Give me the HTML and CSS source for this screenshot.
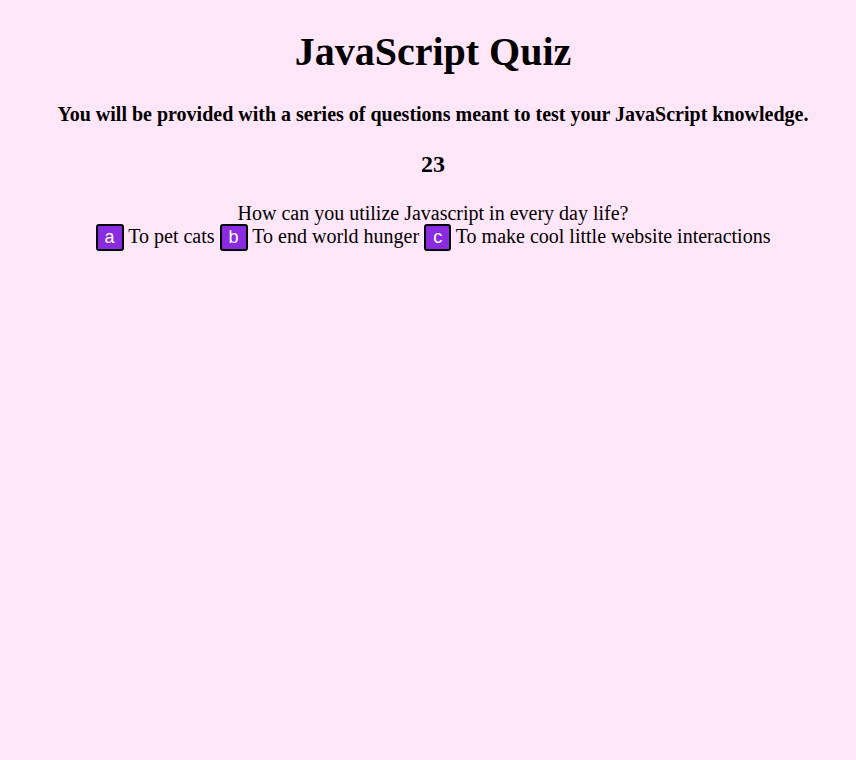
FILE: index.html
```html
<!DOCTYPE html>
<html>
<head>
<meta charset="utf-8">
<link rel="stylesheet" href="styles.css">
</head>
<body>
<header class="header">
  <h1 class="title">JavaScript Quiz</h1>
  <h3 class="intro">You will be provided with a series of questions meant to test your JavaScript knowledge.</h3>
</header>
<h2 class="timer">23</h2>
<div class="quiz">
  <div class="question">How can you utilize Javascript in every day life?</div>
  <div class="answers">
    <button class="choice">a</button> To pet cats <button class="choice">b</button> To end world hunger <button class="choice">c</button> To make cool little website interactions
  </div>
</div>
</body>
</html>
```
FILE: styles.css
```css
body {
  margin: 8px;
  padding-left: 10px;
  background: #ffe6f8;
  font-family: "Liberation Serif", "Times New Roman", serif;
  color: #000;
  text-align: center;
}
.title {
  font-size: 40px;
  margin: 20px 0 28px;
}
.intro {
  font-size: 20px;
  margin: 0;
}
.timer {
  font-size: 24px;
  margin: 25px 0 24px;
}
.quiz {
  font-size: 20px;
}
.answers {
  margin-top: -1px;
}
.choice {
  font-family: "Liberation Sans", Arial, sans-serif;
  font-size: 18px;
  background: #8a2be2;
  color: #fff;
  border: 2px solid #000;
  border-radius: 3px;
  padding: 1px 7px;
  vertical-align: baseline;
}
```
